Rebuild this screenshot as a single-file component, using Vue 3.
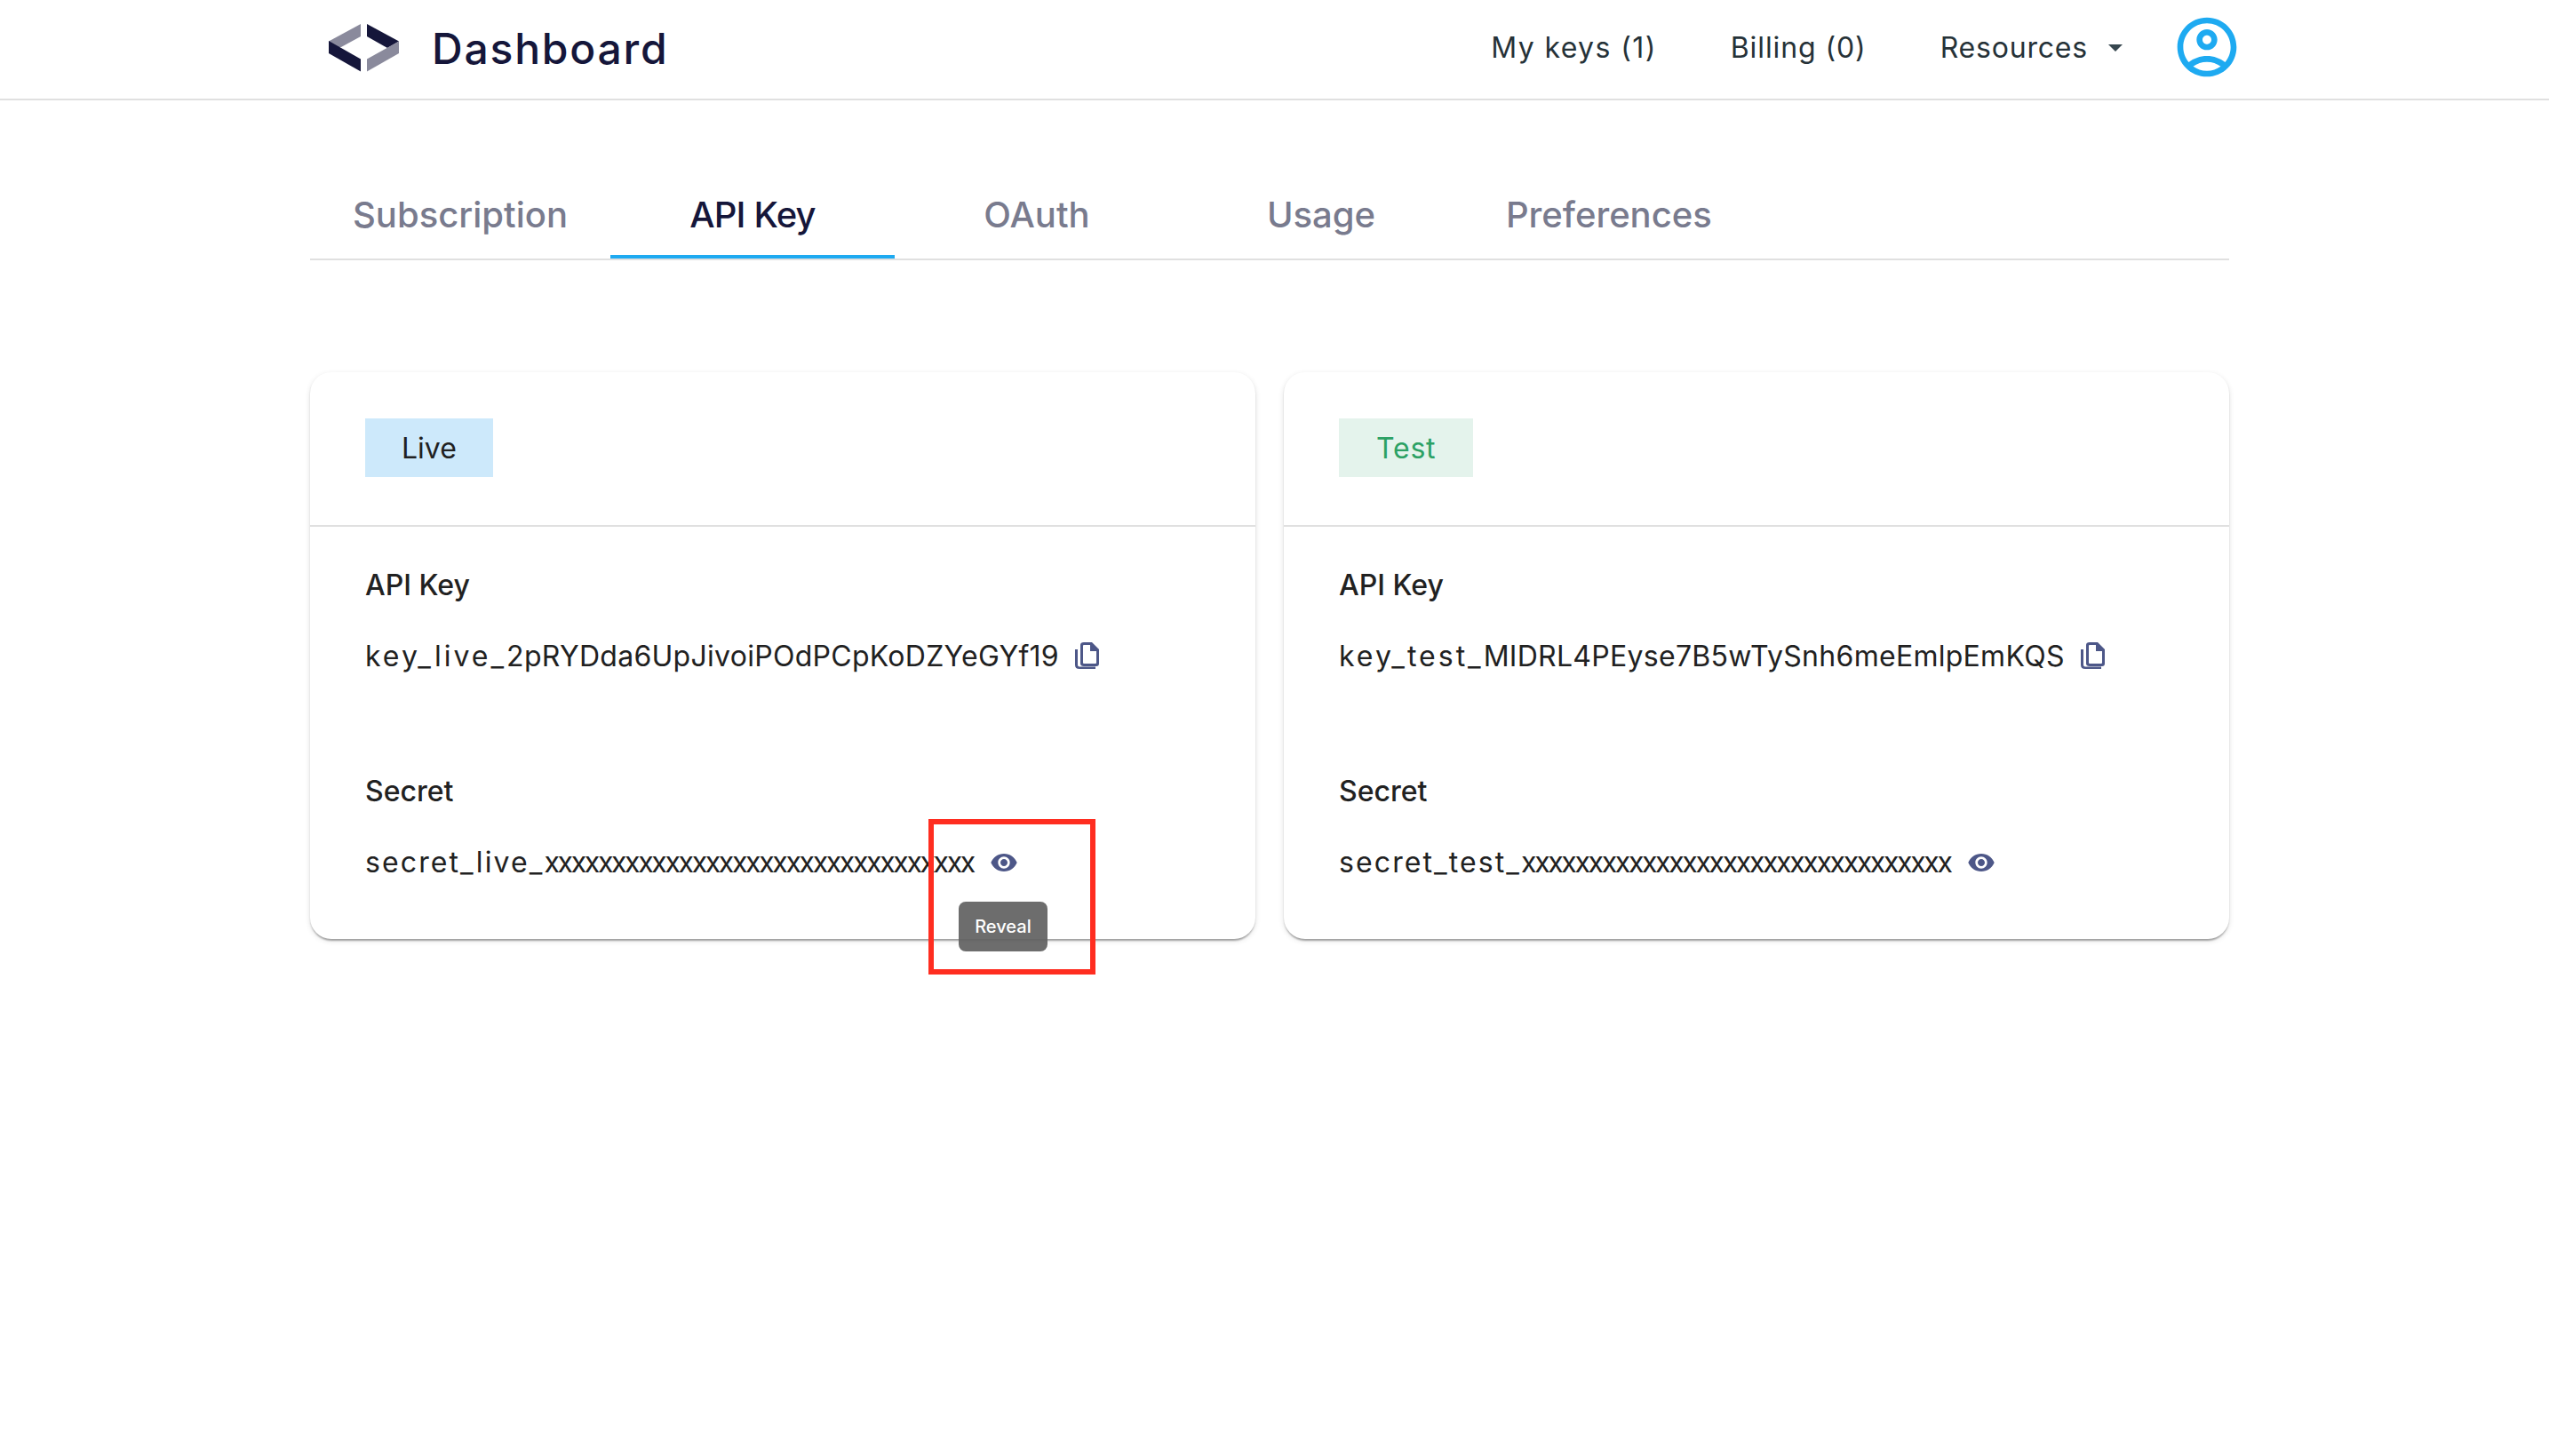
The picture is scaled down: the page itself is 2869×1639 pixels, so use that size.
<script setup>
const tabs = [
  { name: 'Subscription', active: false },
  { name: 'API Key', active: true },
  { name: 'OAuth', active: false },
  { name: 'Usage', active: false },
  { name: 'Preferences', active: false }
]
const cards = [
  { chip: 'Live', cls: 'live', keyPre: 'key_live_', key: '2pRYDda6UpJivoiPOdPCpKoDZYeGYf19', secPre: 'secret_live_', secret: 'xxxxxxxxxxxxxxxxxxxxxxxxxxxxxxxx', tip: true },
  { chip: 'Test', cls: 'test', keyPre: 'key_test_', key: 'MIDRL4PEyse7B5wTySnh6meEmlpEmKQS', secPre: 'secret_test_', secret: 'xxxxxxxxxxxxxxxxxxxxxxxxxxxxxxxx', tip: false }
]
</script>

<template>
  <div class="page">
    <header class="topbar">
      <div class="brand">
        <svg class="logo" width="80" height="54" viewBox="0 0 80 54">
          <path fill="#8a8a9c" d="M0 19.5 36 0v14L14 26 0 26.500Z" />
          <path fill="#15163a" d="M0 19 L36 39.500V53.500L0 33Z" />
          <path fill="#15163a" d="M43 0 79 19.500 66 27 43 14Z" />
          <path fill="#8a8a9c" d="M79 19.500V33L43 53.500V39.500Z" />
        </svg>
        <span class="brand-name">Dashboard</span>
      </div>
      <nav class="nav">
        <span class="nav-item keys">My keys (1)</span>
        <span class="nav-item billing">Billing (0)</span>
        <span class="nav-item res">Resources<i class="caret"></i></span>
        <svg class="avatar" width="80" height="80" viewBox="0 0 24 24">
          <path fill="#1eaaf1" d="M12 2C6.480 2 2 6.480 2 12s4.480 10 10 10 10-4.480 10-10S17.520 2 12 2zM7.350 18.500C8.660 17.560 10.260 17 12 17s3.340.56 4.650 1.500c-1.310.94-2.910 1.500-4.650 1.500s-3.340-.56-4.650-1.500zm10.790-1.380C16.450 15.800 14.320 15 12 15s-4.450.8-6.140 2.120C4.700 15.730 4 13.950 4 12c0-4.420 3.580-8 8-8s8 3.580 8 8c0 1.950-.7 3.730-1.860 5.120zM12 6c-1.930 0-3.500 1.570-3.500 3.500S10.070 13 12 13s3.500-1.570 3.500-3.500S13.930 6 12 6zm0 5c-.83 0-1.500-.67-1.500-1.500S11.170 8 12 8s1.500.67 1.500 1.500S12.830 11 12 11z" />
        </svg>
      </nav>
    </header>

    <main class="content">
      <div class="tabs">
        <div v-for="t in tabs" :key="t.name" class="tab" :class="{ active: t.active }">{{ t.name }}</div>
      </div>

      <section class="cards">
        <article v-for="c in cards" :key="c.chip" class="card">
          <div class="card-head">
            <span class="chip" :class="c.cls">{{ c.chip }}</span>
          </div>
          <div class="card-body">
            <div class="label">API Key</div>
            <div class="value">
              <span><span class="prefix">{{ c.keyPre }}</span><span class="key-rest">{{ c.key }}</span></span>
              <svg class="copy" width="27" height="31" viewBox="0 0 27 31">
                <path fill="#4d5788" d="M0 9h3v17.500q0 2 2 2h18V31H5q-5 0-5-4.500Z" />
                <path fill="#4d5788" fill-rule="evenodd" d="M10 1h9l8 8v16q0 3-3 3H10q-4 0-4-3V4q0-3 4-3Zm0 3q-1 0-1 1v19q0 1 1 1h13q1 0 1-1V11h-7V4Z" />
              </svg>
            </div>
            <div class="label second">Secret</div>
            <div class="value">
              <span><span class="prefix sec">{{ c.secPre }}</span><span class="mask">{{ c.secret }}</span></span>
              <span class="eye-wrap">
                <svg class="eye" width="32" height="32" viewBox="0 0 24 24">
                  <path fill="#4d5788" d="M12 4.500C7 4.500 2.730 7.610 1 12c1.730 4.390 6 7.500 11 7.500s9.270-3.110 11-7.500c-1.730-4.390-6-7.500-11-7.500zM12 17c-2.760 0-5-2.240-5-5s2.240-5 5-5 5 2.240 5 5-2.240 5-5 5zm0-8c-1.660 0-3 1.340-3 3s1.340 3 3 3 3-1.340 3-3-1.340-3-3-3z" />
                </svg>
                <template v-if="c.tip">
                  <span class="tooltip">Reveal</span>
                  <span class="highlight"></span>
                </template>
              </span>
            </div>
          </div>
        </article>
      </section>
    </main>
  </div>
</template>

<style>
html, body { margin: 0; background: #fff; }
</style>

<style scoped>
.page {
  min-height: 1639px;
  background: #fff;
  font-family: Inter, "Noto Sans", sans-serif;
  color: #212121;
}
.topbar {
  display: flex;
  align-items: center;
  justify-content: space-between;
  height: 108px;
  padding: 0 345px 3px 370px;
  border-bottom: 2px solid #e0e0e0;
}
.brand { display: flex; align-items: center; gap: 36px; }
.logo { display: block; }
.brand-name {
  font-size: 48px;
  font-weight: 500;
  color: #15163a;
  letter-spacing: 1.8px;
}
.nav { display: flex; align-items: center; }
.nav-item {
  font-size: 32px;
  line-height: 48px;
  color: #263238;
  white-space: nowrap;
  margin-right: 83px;
  display: inline-flex;
  align-items: center;
}
.nav-item.keys { letter-spacing: 1.4px; }
.nav-item.billing { letter-spacing: 0.9px; }
.nav-item.res { margin-right: 55px; letter-spacing: 0.8px; }
.caret {
  display: block;
  width: 0;
  height: 0;
  margin-left: 23px;
  border-left: 8.5px solid transparent;
  border-right: 8.5px solid transparent;
  border-top: 8.500px solid #37474f;
}
.avatar { display: block; margin-top: -2px; }
.content { width: 2160px; margin-left: 349px; }
.tabs {
  display: flex;
  margin-top: 82px;
  border-bottom: 2px solid #e0e0e0;
}
.tab {
  min-width: 320px;
  height: 96px;
  box-sizing: border-box;
  padding: 0 48px 4px;
  display: flex;
  align-items: center;
  justify-content: center;
  font-size: 40px;
  font-weight: 500;
  color: #797b8e;
  white-space: nowrap;
}
.tab.active {
  color: #15163a;
  letter-spacing: -0.8px;
  box-shadow: inset 0 -4px 0 #1eaaf1;
}
.cards {
  display: grid;
  grid-template-columns: 1fr 1fr;
  gap: 32px;
  margin-top: 126px;
}
.card {
  background: #fff;
  border-radius: 24px;
  box-shadow: 0 4px 2px -2px rgba(0,0,0,.2), 0 2px 2px 0 rgba(0,0,0,.14), 0 2px 6px 0 rgba(0,0,0,.12);
}
.card-head {
  padding: 52px 62px 54px;
  border-bottom: 2px solid #e0e0e0;
  display: flex;
}
.chip {
  height: 66px;
  padding: 0 41px;
  display: flex;
  align-items: center;
  font-size: 32px;
}
.chip.live { background: #cde9fb; color: #212121; }
.chip.test { background: #e4f3ec; color: #2ca164; padding: 0 42px; letter-spacing: 0.8px; }
.card-body { padding: 42px 62px 62px; }
.label { font-size: 32px; line-height: 48px; font-weight: 500; color: #212121; }
.label.second { margin-top: 104px; }
.value {
  margin-top: 32px;
  display: flex;
  align-items: center;
  gap: 18px;
  font-size: 32px;
  line-height: 48px;
  color: #212121;
  white-space: nowrap;
}
.prefix { letter-spacing: 3px; }
.prefix.sec { letter-spacing: 2.1px; }
.key-rest { letter-spacing: 0.28px; }
.mask { letter-spacing: -2.36px; }
.copy { display: block; margin-top: -4px; flex: none; }
.eye-wrap { position: relative; display: block; width: 32px; height: 32px; flex: none; }
.eye { display: block; }
.tooltip {
  position: absolute;
  top: 60px;
  left: -35px;
  width: 100px;
  height: 56px;
  border-radius: 8px;
  background: rgba(97,97,97,.92);
  color: #fff;
  font-size: 20px;
  font-weight: 500;
  display: flex;
  align-items: center;
  justify-content: center;
}
.highlight {
  position: absolute;
  top: -33px;
  left: -69px;
  width: 188px;
  height: 175px;
  box-sizing: border-box;
  border: 6px solid #ff2d20;
}
</style>
